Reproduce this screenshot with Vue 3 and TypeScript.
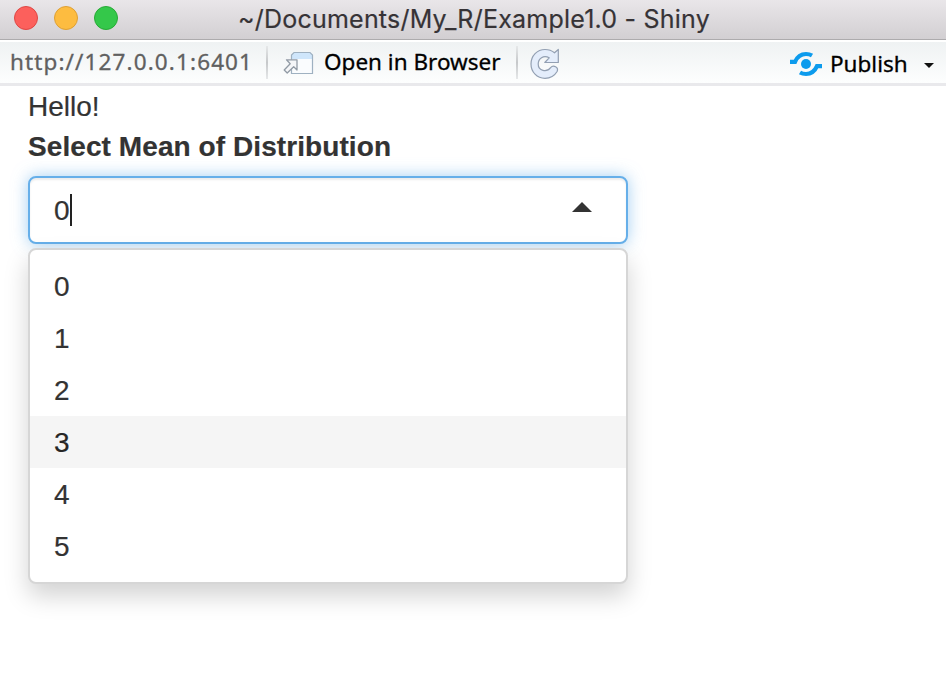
<script setup lang="ts">
import { ref } from 'vue'

const options: string[] = ['0', '1', '2', '3', '4', '5']
const selected = ref<string>('0')
const active = ref<string>('3')
</script>

<template>
  <div class="window">
    <header class="titlebar">
      <div class="lights">
        <span class="light close"></span>
        <span class="light minimize"></span>
        <span class="light maximize"></span>
      </div>
      <div class="title">~/Documents/My_R/Example1.0 - Shiny</div>
    </header>

    <nav class="toolbar">
      <span class="url">http://127.0.0.1:6401</span>
      <span class="separator"></span>
      <button class="tool open">
        <svg class="open-icon" width="32" height="24" viewBox="0 0 32 24">
          <path d="M8.500 22.500V4l2.500-2.500h16L29.500 4v18.500z" fill="#fafcfe" />
          <path d="M8.500 8V4l2.500-2.500h16L29.500 4v4z" fill="#cfe6fb" />
          <path d="M8.500 22.500V4l2.500-2.500h16L29.500 4v18.500z" fill="none" stroke="#9fb1c1" stroke-width="1.200" />
          <path d="M3.500 8.800H14V19l-3.300-3.200L4.200 22 1.200 19l6-6.200z" fill="#f5f6f8" stroke="#929ba5" stroke-width="1.300" stroke-linejoin="round" />
        </svg>
        <span class="open-label">Open in Browser</span>
      </button>
      <span class="separator"></span>
      <button class="tool reload" aria-label="Reload">
        <svg width="30" height="32" viewBox="0 0 30 32">
          <path d="M24.500 4.800 28.300 1.500v13H14.800l4.400-4.700C13.500 6.700 8.200 10.500 8.200 16c0 7 8.600 8.700 12.400 3.600 2.800-3.200 8.400-.2 6.500 3.900C24.500 27.800 20 30.300 15 30.300 7 30.300 1 24 1 16 1 7.700 7.200 1.500 15 1.500c3.800 0 7 1.200 9.500 3.300z" fill="#e4edfb" stroke="#929fb2" stroke-width="1.200" stroke-linejoin="round" />
        </svg>
      </button>
      <button class="tool publish">
        <svg width="32" height="26" viewBox="0 0 32 26">
          <circle cx="16" cy="13" r="5" fill="#0c9bed" />
          <path d="M0 10.800h5C7.200 5.800 11.300 3 16 3c2.300 0 4.300.5 6 1.500" fill="none" stroke="#0c9bed" stroke-width="4.200" />
          <path d="M32 15.200h-5c-2.200 5-6.300 7.800-11 7.800-2.300 0-4.300-.5-6-1.500" fill="none" stroke="#0c9bed" stroke-width="4.200" />
        </svg>
        <span class="publish-label">Publish</span>
        <span class="caret-down"></span>
      </button>
    </nav>

    <main class="page">
      <div class="greeting">Hello!</div>
      <label class="label">Select Mean of Distribution</label>
      <div class="select">
        <span class="value">{{ selected }}</span>
        <span class="cursor"></span>
        <span class="caret-up"></span>
      </div>
      <ul class="dropdown">
        <li
          v-for="option in options"
          :key="option"
          class="option"
          :class="{ active: option === active }"
          @mouseenter="active = option"
          @click="selected = option"
        >{{ option }}</li>
      </ul>
    </main>
  </div>
</template>

<style>
body {
  background: #fff;
}
</style>

<style scoped>
.window {
  height: 688px;
  overflow: hidden;
  box-sizing: border-box;
  background: #fff;
  color: #333;
  font-family: "Liberation Sans", sans-serif;
}

.titlebar {
  display: grid;
  grid-template-columns: 238px 1fr;
  align-items: center;
  height: 40px;
  box-sizing: border-box;
  padding-bottom: 3px;
  border-bottom: 1px solid #adabad;
  background: linear-gradient(#e9e6e9, #d2cfd2);
}

.lights {
  display: flex;
  gap: 16px;
  padding-left: 14px;
}

.light {
  width: 24px;
  height: 24px;
  box-sizing: border-box;
  border: 1px solid;
  border-radius: 50%;
}

.close {
  background: #fc605c;
  border-color: #df4744;
}

.minimize {
  background: #fdbc40;
  border-color: #dea034;
}

.maximize {
  background: #34c84a;
  border-color: #27aa35;
}

.title {
  padding-top: 2px;
  font-family: Inter, sans-serif;
  font-size: 25px;
  line-height: 34px;
  letter-spacing: 0.22px;
  white-space: nowrap;
  color: #363336;
  -webkit-text-stroke: 0.2px currentColor;
}

.toolbar {
  display: flex;
  align-items: center;
  height: 46px;
  box-sizing: border-box;
  border-top: 2px solid #fff;
  border-bottom: 3px solid #e9e9ec;
  padding-left: 10px;
  padding-right: 12px;
  background: linear-gradient(#eff2f3, #fdfefe);
  font-family: "Noto Sans", sans-serif;
  font-size: 22.5px;
  white-space: nowrap;
  -webkit-text-stroke: 0.3px currentColor;
}

.url {
  width: 256px;
  padding-bottom: 2px;
  color: #606060;
  letter-spacing: 1.12px;
}

.separator {
  width: 2px;
  height: 33px;
  background: linear-gradient(#e6e8e9, #c6c8ca 50%, #e6e8e9);
}

.tool {
  display: flex;
  align-items: center;
  padding: 0;
  border: 0;
  background: none;
  color: #000;
  font: inherit;
}

.open {
  width: 248px;
  padding-left: 15px;
  box-sizing: border-box;
}

.open-label {
  margin-left: 9px;
  padding-bottom: 2px;
}

.reload {
  margin-left: 12px;
  padding-top: 2px;
}

.publish {
  margin-left: auto;
  padding-top: 2px;
}

.publish-label {
  width: 77px;
  margin-left: 8px;
  padding-bottom: 1px;
  text-align: left;
}

.caret-down {
  width: 0;
  height: 0;
  margin-left: 17px;
  margin-top: 4px;
  border-left: 5px solid transparent;
  border-right: 5px solid transparent;
  border-top: 5px solid #111;
}

.page {
  padding: 1px 28px 0;
  font-size: 28px;
  line-height: 40px;
  -webkit-text-stroke: 0.2px currentColor;
}

.greeting {
  letter-spacing: 0;
}

.label {
  display: block;
  margin-bottom: 9px;
  font-weight: 700;
  letter-spacing: 0.08px;
}

.select {
  display: flex;
  align-items: center;
  width: 600px;
  height: 68px;
  box-sizing: border-box;
  padding: 0 34px 0 24px;
  border: 2px solid #66afe9;
  border-radius: 8px;
  background: #fff;
  box-shadow: inset 0 2px 2px rgba(0, 0, 0, 0.075), 0 0 16px rgba(102, 175, 233, 0.6);
}

.value {
  padding-top: 2px;
}

.cursor {
  width: 2px;
  height: 32px;
  background: #222;
}

.caret-up {
  width: 0;
  height: 0;
  margin-left: auto;
  margin-bottom: 6px;
  border-left: 10px solid transparent;
  border-right: 10px solid transparent;
  border-bottom: 10px solid #333;
}

.dropdown {
  width: 600px;
  height: 336px;
  box-sizing: border-box;
  position: relative;
  margin: 4px 0 0;
  padding: 10px 0;
  border: 2px solid #d6d6d6;
  border-radius: 8px;
  background: #fff;
  box-shadow: 0 12px 24px rgba(0, 0, 0, 0.175);
  list-style: none;
}

.option {
  height: 52px;
  box-sizing: border-box;
  padding: 1px 24px 0;
  line-height: 52px;
}

.option.active {
  background: #f5f5f5;
  color: #262626;
}
</style>
